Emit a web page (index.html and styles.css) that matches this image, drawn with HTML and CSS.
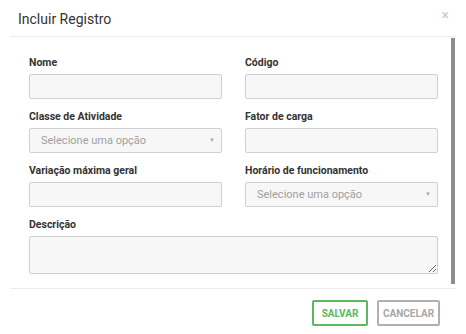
FILE: index.html
```html
<!DOCTYPE html>
<html lang="pt-BR">
<head>
  <meta charset="UTF-8" />
  <meta name="viewport" content="width=device-width, initial-scale=1.0"/>
  <title>Incluir Registro</title>
  <link rel="stylesheet" href="styles.css">
</head>
<body>

<div class="modal">
  <div class="modal-header">
    <h1>Incluir Registro</h1>
    <span class="close">&times;</span>
  </div>

  <div class="modal-body">
    <form class="fields">
      <div class="field">
        <label for="nome">Nome</label>
        <input type="text" id="nome" />
      </div>
      <div class="field">
        <label for="codigo">Código</label>
        <input type="text" id="codigo" />
      </div>

      <div class="field">
        <label for="classe">Classe de Atividade</label>
        <div class="select-wrap">
          <select id="classe">
            <option>Selecione uma opção</option>
          </select>
        </div>
      </div>
      <div class="field">
        <label for="fator">Fator de carga</label>
        <input type="text" id="fator" />
      </div>

      <div class="field">
        <label for="variacao">Variação máxima geral</label>
        <input type="text" id="variacao" />
      </div>
      <div class="field">
        <label for="horario">Horário de funcionamento</label>
        <div class="select-wrap">
          <select id="horario">
            <option>Selecione uma opção</option>
          </select>
        </div>
      </div>

      <div class="field wide">
        <label for="descricao">Descrição</label>
        <textarea id="descricao"></textarea>
      </div>
    </form>
    <svg class="scroll-thumb" width="5" height="251" viewBox="0 0 5 251">
      <rect x="0" y="1" width="4" height="246" fill="#8e8e8e"/>
    </svg>
  </div>

  <div class="modal-footer">
    <button class="btn btn-save">Salvar</button>
    <button class="btn btn-cancel">Cancelar</button>
  </div>
</div>

</body>
</html>
```

FILE: styles.css
```css
html, body {
  margin: 0;
  padding: 0;
  background: #fff;
}
body {
  font-family: Roboto, "Noto Sans", sans-serif;
  color: #333;
  overflow: hidden;
}
.modal {
  margin: 0 10px;
  height: 334px;
  display: flex;
  flex-direction: column;
}
.modal-header {
  height: 36px;
  border-bottom: 1px solid #ececec;
  display: flex;
  align-items: center;
  justify-content: space-between;
  padding: 0 7px 0 8px;
}
.modal-header h1 {
  margin: 0;
  font-size: 14px;
  font-weight: 400;
  color: #333;
  padding-top: 2px;
}
.close {
  color: #c8c8c8;
  font-size: 14px;
  align-self: flex-start;
  margin-top: 7px;
}
.modal-body {
  height: 251px;
  display: flex;
}
.scroll-thumb {
  flex: none;
  display: block;
}
.fields {
  flex: 1 1 auto;
  min-width: 0;
  display: grid;
  grid-template-columns: 1fr 1fr;
  column-gap: 23px;
  row-gap: 11px;
  align-content: start;
  padding: 19px 13px 0 19px;
  margin: 0;
}
.field.wide {
  grid-column: 1 / 3;
}
.field label {
  display: block;
  font-size: 10.5px;
  font-weight: 700;
  line-height: 14px;
  color: #333;
  margin-bottom: 4px;
}
.field input,
.field select,
.field textarea {
  display: block;
  box-sizing: border-box;
  width: 100%;
  height: 25px;
  margin: 0;
  background: #f7f7f7;
  border: 1px solid #d0d0d0;
  border-radius: 2px;
  font-family: inherit;
  font-size: 11px;
}
.field textarea {
  height: 38px;
  resize: vertical;
}
.select-wrap {
  position: relative;
}
.field select {
  -webkit-appearance: none;
  appearance: none;
  color: #a0a0a0;
  padding: 0 0 0 11px;
}
.select-wrap::after {
  content: "\25BC";
  position: absolute;
  right: 7px;
  top: 8px;
  font-size: 6px;
  color: #a8a8a8;
  pointer-events: none;
}
.modal-footer {
  border-top: 1px solid #ececec;
  display: flex;
  justify-content: flex-end;
  gap: 9px;
  padding: 11px 16px 0 0;
}
.btn {
  height: 26px;
  padding: 0;
  background: #fff;
  border-radius: 2px;
  font-family: inherit;
  font-size: 10px;
  font-weight: 700;
  text-transform: uppercase;
  text-align: center;
  cursor: pointer;
}
.btn-save {
  border: 2px solid #5cb85c;
  color: #5cb85c;
  width: 56px;
}
.btn-cancel {
  border: 2px solid #b0b0b0;
  color: #a8a8a8;
  width: 63px;
}
```
